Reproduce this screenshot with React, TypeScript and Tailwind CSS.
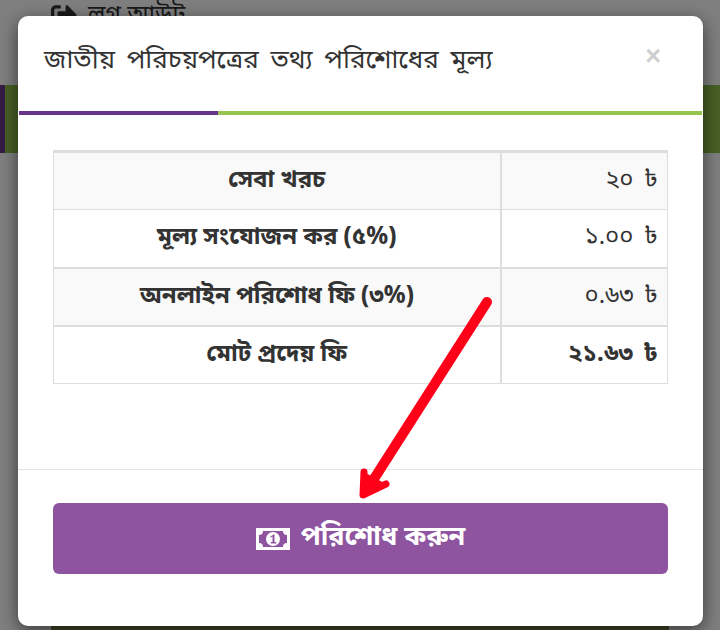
import { FaSignOutAlt } from 'react-icons/fa';

const fontStack = { fontFamily: '"Noto Sans Bengali", "Lohit Bengali", "Noto Sans", "Liberation Sans", sans-serif' };

const rows = [
  { label: 'সেবা খরচ', value: '২০ ৳', shaded: true, heavy: false },
  { label: 'মূল্য সংযোজন কর (৫%)', value: '১.০০ ৳', shaded: false, heavy: false },
  { label: 'অনলাইন পরিশোধ ফি (৩%)', value: '০.৬৩ ৳', shaded: true, heavy: false },
  { label: 'মোট প্রদেয় ফি', value: '২১.৬৩ ৳', shaded: false, heavy: true },
];

function MoneyIcon() {
  return (
    <svg className="h-[22px] w-[34px]" viewBox="0 0 34 22">
      <rect width="34" height="22" fill="#fff" />
      <path
        d="M7 3 H27 A4 4 0 0 0 31 7 V15 A4 4 0 0 0 27 19 H7 A4 4 0 0 0 3 15 V7 A4 4 0 0 0 7 3 Z"
        fill="#8e54a0"
      />
      <circle cx="17" cy="11" r="7" fill="#fff" />
      <path d="M14.5 8.5 L17.5 6.5 H18.5 V14 H20.2 V15.5 H14.8 V14 H16.5 V8.6 L14.5 9.8 Z" fill="#8e54a0" />
    </svg>
  );
}

export default function App() {
  return (
    <div className="relative h-[630px] w-[720px] overflow-hidden bg-white text-[#333]" style={fontStack}>
      {/* Page behind the dialog */}
      <div className="flex h-[85px] items-start gap-[11px] pl-[51px] text-[24px] leading-[32px] text-[#333]">
        <FaSignOutAlt className="mt-[2px] h-[26px] w-[26px]" />
        <span>লগ আউট</span>
      </div>
      <div className="flex h-[68px]">
        <div className="w-[5px] bg-[#6b3a8c]" />
        <div className="flex-1 bg-[#8fc04a]" />
      </div>
      <div className="mx-[51px] mt-[473px] h-[20px] bg-[#7f8a50]" />

      {/* Backdrop */}
      <div className="absolute inset-0 bg-black/50 pt-4">
        {/* Dialog */}
        <div className="relative mx-[18px] flex h-[610px] w-[685px] flex-col rounded-[10px] bg-white shadow-[0_5px_18px_rgba(0,0,0,0.55)]">
          <div className="flex h-[95px] items-start justify-between pl-[26px] pr-[42px] pt-[26px]">
            <h4 className="text-[26px] leading-[40px] text-[#333] [word-spacing:5px]">জাতীয় পরিচয়পত্রের তথ্য পরিশোধের মূল্য</h4>
            <span className="mt-[-6px] text-[27px] font-bold leading-[40px] text-[#cfcfcf]" style={{ fontFamily: '"Liberation Sans", sans-serif' }}>×</span>
          </div>

          <div className="ml-px flex h-1 w-[683px]">
            <div className="w-[199px] bg-[#68358a]" />
            <div className="flex-1 bg-[#95c451]" />
          </div>

          <div className="px-[35px] pt-[35px]">
            <table className="w-[615px] table-fixed border-collapse border border-t-[3px] border-[#ddd]">
              <colgroup>
                <col className="w-[447px]" />
                <col />
              </colgroup>
              <tbody>
                {rows.map((row, i) => (
                  <tr key={i} className={row.shaded ? 'h-[58px] bg-[#f9f9f9]' : 'h-[58px] bg-white'}>
                    <td className={`border-r-2 border-[#ddd] ${i > 0 ? (i === 1 ? 'border-t' : 'border-t-2') : ''} text-center align-middle text-[24px] font-bold leading-[36px] text-[#333]`}>
                      {row.label}
                    </td>
                    <td className={`border-[#ddd] ${i > 0 ? (i === 1 ? 'border-t' : 'border-t-2') : ''} pr-[9px] text-right align-middle text-[24px] leading-[32px] text-[#333] [word-spacing:4px] ${row.heavy ? 'font-bold' : ''}`}>
                      {row.value}
                    </td>
                  </tr>
                ))}
              </tbody>
            </table>
          </div>

          <div className="mt-[85px] border-t border-[#e5e5e5] px-[35px] pt-[33px]">
            <button className="flex h-[71px] w-[615px] items-center justify-center gap-[11px] rounded-[6px] bg-[#8e54a0] text-[27px] font-bold text-white">
              <MoneyIcon />
              <span>পরিশোধ করুন</span>
            </button>
          </div>
        </div>

        {/* Red arrow annotation */}
        <svg className="absolute left-0 top-0 h-[630px] w-[720px]" viewBox="0 0 720 630" fill="none">
          <path d="M487 302 L372 482" stroke="#ff0019" strokeWidth="10" strokeLinecap="round" />
          <path d="M364 472 L363 495 L386 484" fill="#ff0019" stroke="#ff0019" strokeWidth="7" strokeLinejoin="round" strokeLinecap="round" />
        </svg>
      </div>
    </div>
  );
}
